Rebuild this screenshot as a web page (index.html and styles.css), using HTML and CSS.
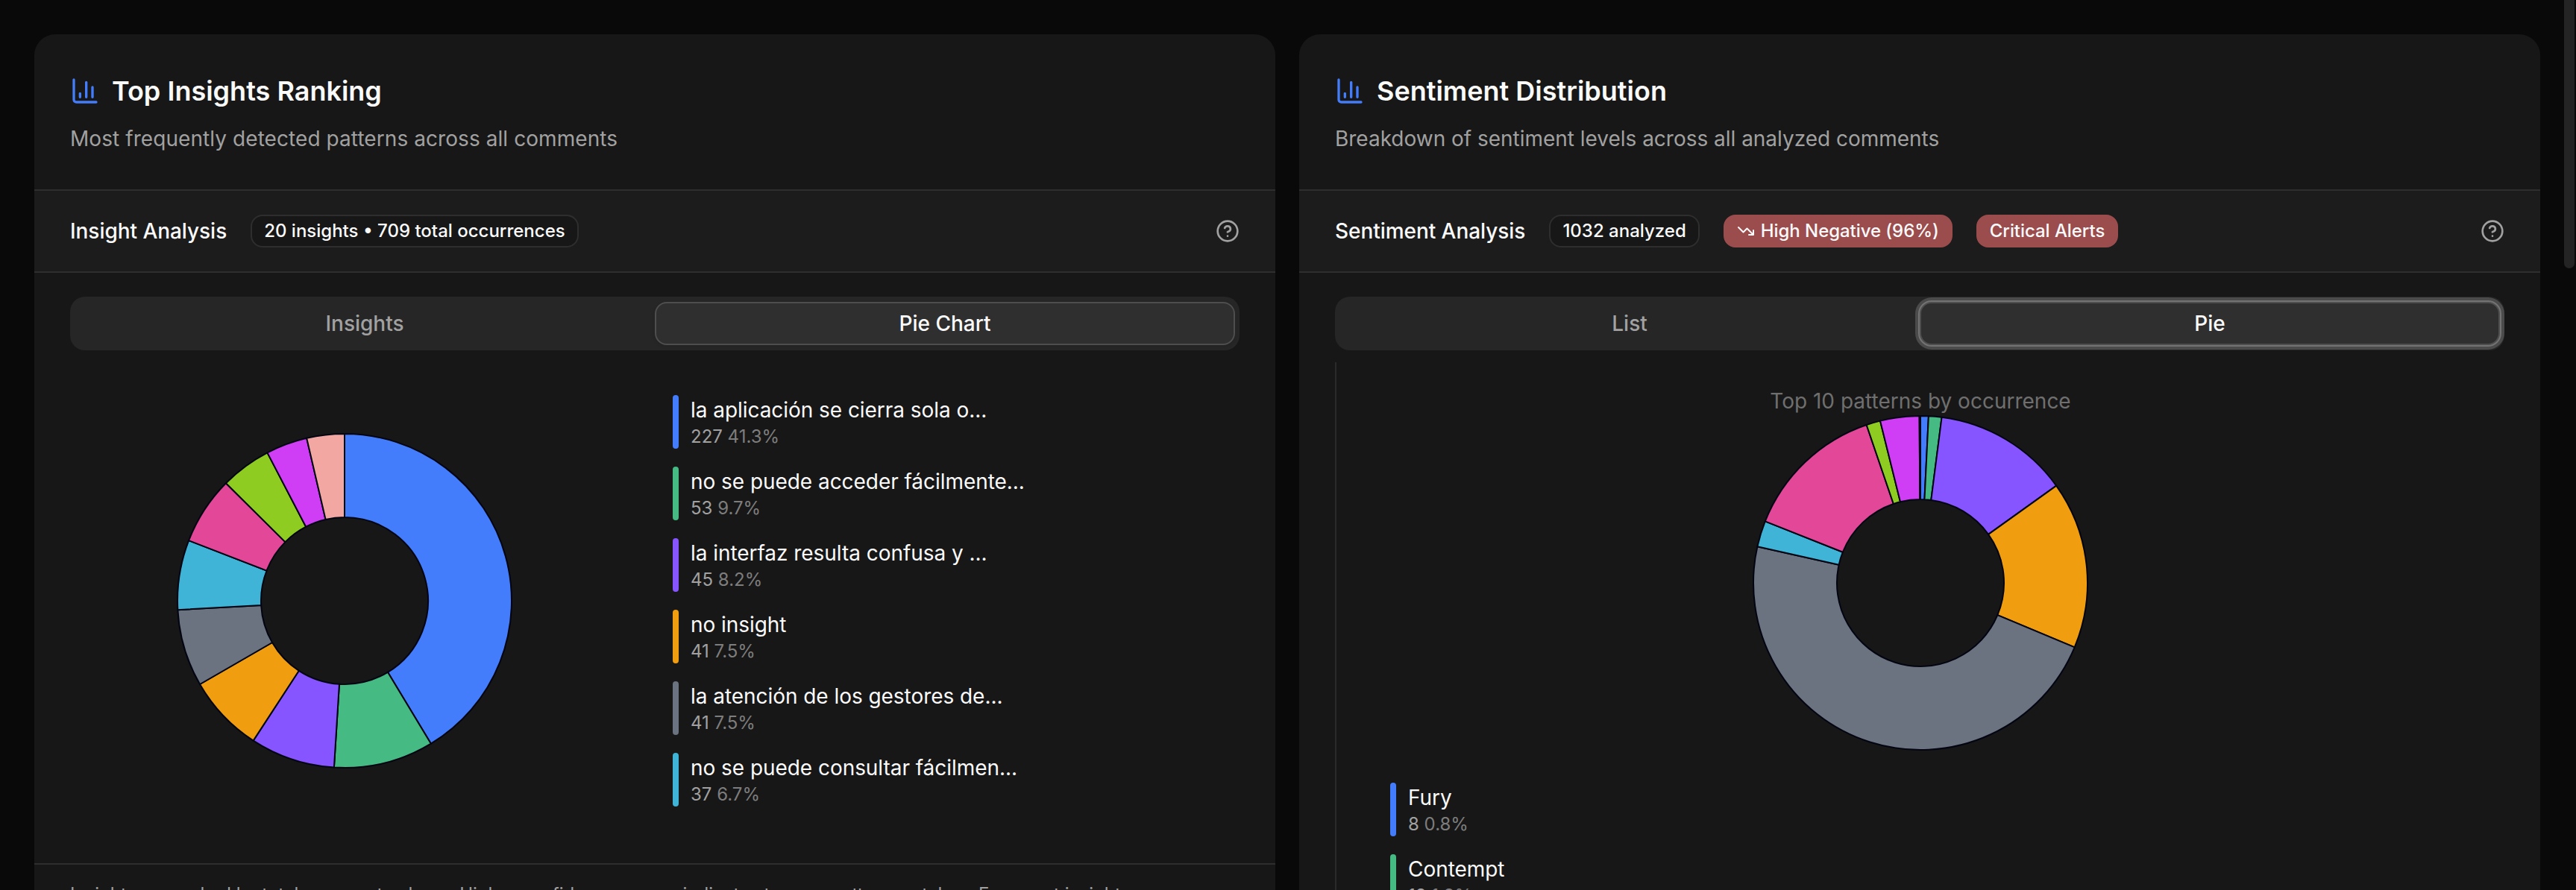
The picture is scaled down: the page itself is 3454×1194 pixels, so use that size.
FILE: index.html
```html
<!DOCTYPE html>
<html lang="en">
<head>
<meta charset="utf-8">
<title>Insights</title>
<link rel="stylesheet" href="styles.css">
</head>
<body>
<svg class="defs" aria-hidden="true">
  <symbol id="chart" viewBox="0 0 24 24"><path d="M3 3v16a2 2 0 0 0 2 2h16M18 17V9M13 17V5M8 17v-3"/></symbol>
  <symbol id="help" viewBox="0 0 24 24"><circle cx="12" cy="12" r="10"/><path d="M9.09 9a3 3 0 0 1 5.83 1c0 2-3 3-3 3M12 17h.01"/></symbol>
  <symbol id="down" viewBox="0 0 24 24"><path d="M16 17h6v-6M22 17l-8.500-8.500-5 5L2 7"/></symbol>
</svg>
<main class="grid">
  <section class="card">
    <header class="head">
      <h2 class="title"><svg class="icon-chart"><use href="#chart"/></svg><span>Top Insights Ranking</span></h2>
      <p class="sub wide">Most frequently detected patterns across all comments</p>
    </header>
    <div class="band">
      <h3 class="label">Insight Analysis</h3>
      <span class="badge">20 insights • 709 total occurrences</span>
      <svg class="icon-help"><use href="#help"/></svg>
    </div>
    <div class="body">
      <div class="tabs"><button class="tab">Insights</button><button class="tab active">Pie Chart</button></div>
      <div class="split">
        <div class="plot"><svg class="donut" id="insights" viewBox="-226 -226 452 452"></svg></div>
        <ul class="legend">
          <li class="item blue"><b>la aplicación se cierra sola o...</b><span>227 <i>41.3%</i></span></li>
          <li class="item green"><b>no se puede acceder fácilmente...</b><span>53 <i>9.7%</i></span></li>
          <li class="item purple"><b>la interfaz resulta confusa y ...</b><span>45 <i>8.2%</i></span></li>
          <li class="item orange"><b>no insight</b><span>41 <i>7.5%</i></span></li>
          <li class="item gray"><b>la atención de los gestores de...</b><span>41 <i>7.5%</i></span></li>
          <li class="item cyan"><b>no se puede consultar fácilmen...</b><span>37 <i>6.7%</i></span></li>
        </ul>
      </div>
    </div>
    <footer class="foot">Insights are ranked by total comment volume. Higher confidence scores indicate stronger pattern matches. Emergent insights</footer>
  </section>
  <section class="card">
    <header class="head">
      <h2 class="title"><svg class="icon-chart"><use href="#chart"/></svg><span>Sentiment Distribution</span></h2>
      <p class="sub">Breakdown of sentiment levels across all analyzed comments</p>
    </header>
    <div class="band">
      <h3 class="label">Sentiment Analysis</h3>
      <span class="badge">1032 analyzed</span>
      <span class="badge alert"><svg class="icon-down"><use href="#down"/></svg>High Negative (96%)</span>
      <span class="badge alert">Critical Alerts</span>
      <svg class="icon-help"><use href="#help"/></svg>
    </div>
    <div class="body">
      <div class="tabs"><button class="tab">List</button><button class="tab active focused">Pie</button></div>
      <div class="stack">
        <p class="caption">Top 10 patterns by occurrence</p>
        <svg class="donut" id="sentiment" viewBox="-226 -226 452 452"></svg>
        <ul class="legend">
          <li class="item blue"><b>Fury</b><span>8 <i>0.8%</i></span></li>
          <li class="item green"><b>Contempt</b><span>13 <i>1.3%</i></span></li>
        </ul>
      </div>
    </div>
  </section>
</main>
<div class="scrollbar"></div>
<script src="charts.js"></script>
</body>
</html>
```
FILE: styles.css
```css
* { box-sizing: border-box; margin: 0; padding: 0; }
body { height: 1194px; overflow: hidden; background: #090909; color: #fafafa; font-family: Inter, sans-serif; font-size: 28px; line-height: 40px; }
svg { fill: none; stroke: currentColor; stroke-width: 2; stroke-linecap: round; stroke-linejoin: round; flex: none; display: block; }
.defs { display: none; }
.grid { display: grid; grid-template-columns: 1664px 1664px; gap: 32px; padding: 46px 0 0 46px; height: 1194px; }
.card { background: #171717; border-radius: 28px 28px 0 0; height: 1148px; overflow: hidden; }
.head { height: 208px; padding: 48px; }
.title { display: flex; align-items: center; gap: 16px; font-size: 36px; font-weight: 600; line-height: 56px; margin-bottom: 16px; }
.icon-chart { width: 40px; height: 40px; color: #447dfb; }
.sub { color: #a1a1a1; white-space: nowrap; letter-spacing: -0.02px; }
.wide { letter-spacing: 0.07px; }
.band { height: 112px; padding: 0 48px; display: flex; align-items: center; gap: 32px; background: #1c1c1c; border: solid #2e2e2e; border-width: 2px 0; }
.label { font-size: 28px; font-weight: 500; letter-spacing: -0.05px; }
.badge { height: 44px; padding: 0 16px; border: 2px solid #2e2e2e; border-radius: 16px; display: flex; align-items: center; gap: 8px; font-size: 24px; font-weight: 500; background: #171717; white-space: nowrap; }
.alert { background: #9b4d4d; border-color: #9b4d4d; letter-spacing: -0.06px; }
.icon-down { width: 24px; height: 24px; }
.icon-help { width: 32px; height: 32px; margin-left: auto; color: #a1a1a1; }
.body { padding: 32px 48px; }
.tabs { height: 72px; padding: 7px 6px; border-radius: 20px; background: #262626; display: grid; grid-template-columns: 1fr 1fr; margin-bottom: 16px; }
.tab { font: inherit; font-weight: 500; color: #a1a1a1; background: none; border: 2px solid transparent; border-radius: 16px; }
.active { color: #fafafa; background: #2f2f2f; border-color: #4e4e4e; box-shadow: 0 2px 4px rgba(0,0,0,.1); }
.focused { outline: 2px solid #737373; box-shadow: 0 0 0 6px #4b4b4b; }
.split { display: flex; align-items: center; gap: 72px; height: 640px; }
.plot { width: 736px; display: flex; justify-content: center; }
.donut { width: 452px; height: 452px; }
.donut path { stroke: #030512; stroke-width: 2; }
.legend { list-style: none; display: flex; flex-direction: column; gap: 24px; }
.item { height: 72px; display: grid; grid-template: 40px 32px / 8px auto; column-gap: 16px; white-space: nowrap; }
.item::before { content: ""; grid-row: 1 / 3; border-radius: 4px; background: var(--c); }
.item b { font-weight: 400; letter-spacing: -0.05px; }
.item span { grid-column: 2; font-size: 24px; line-height: 32px; color: #a1a1a1; }
.item i { font-style: normal; color: #7d7d7d; }
.blue { --c: #447dfb; }
.green { --c: #46ba83; }
.purple { --c: #8655ff; }
.orange { --c: #f09d10; }
.gray { --c: #6b7280; }
.cyan { --c: #3fb4d6; }
.foot { border-top: 2px solid #2e2e2e; padding: 24px 48px; font-size: 24px; line-height: 32px; color: #a1a1a1; white-space: nowrap; }
.stack { border-left: 2px solid #2a2a2a; padding-top: 32px; height: 900px; display: flex; flex-direction: column; align-items: center; }
.caption { color: #6f6f6f; }
.stack .donut { margin: -2px 0 42px; }
.stack .legend { align-self: flex-start; margin-left: 72px; }
.scrollbar { position: absolute; right: 2px; top: 0; width: 14px; height: 360px; background: #242424; border-radius: 0 0 7px 7px; }
```
FILE: charts.js
```js
const colors = ["#447dfb", "#46ba83", "#8655ff", "#f09d10", "#6b7280", "#3fb4d6", "#e34798", "#8fcc22", "#cf3df5", "#f3a7a3"];

function donut(id, values) {
  const total = values.reduce((a, b) => a + b, 0);
  const point = (v, r) => {
    const a = v / total * 2 * Math.PI;
    return (r * Math.sin(a)).toFixed(2) + " " + (-r * Math.cos(a)).toFixed(2);
  };
  let from = 0;
  document.getElementById(id).innerHTML = values.map((v, i) => {
    const to = from + v;
    const large = v / total > 0.5 ? 1 : 0;
    const d = `M${point(from, 224)}A224 224 0 ${large} 1 ${point(to, 224)}L${point(to, 112)}A112 112 0 ${large} 0 ${point(from, 112)}Z`;
    from = to;
    return `<path d="${d}" fill="${colors[i]}"/>`;
  }).join("");
}

donut("insights", [227, 53, 45, 41, 41, 37, 36, 27, 22, 20]);
donut("sentiment", [8, 13, 135, 167, 487, 26, 142, 14, 39, 1]);
```
